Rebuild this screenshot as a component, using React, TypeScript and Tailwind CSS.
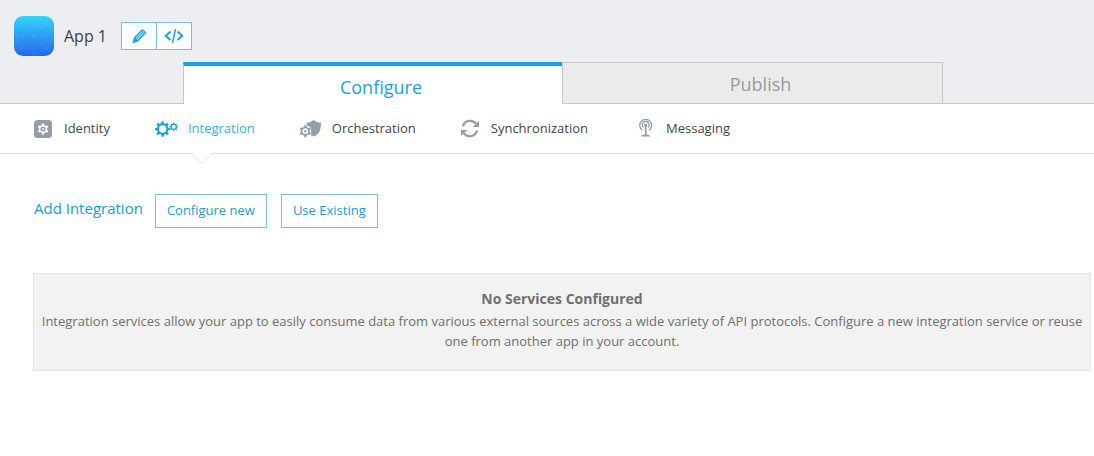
import type { ReactNode } from 'react';

function gearPath(cx: number, cy: number, outer: number, inner: number, hole: number, teeth: number) {
  const step = (Math.PI * 2) / teeth;
  const at = (r: number, a: number) =>
    `${(cx + r * Math.sin(a)).toFixed(2)} ${(cy - r * Math.cos(a)).toFixed(2)}`;
  const points: string[] = [];
  for (let i = 0; i < teeth; i++) {
    const a = i * step;
    points.push(at(inner, a - step * 0.28), at(outer, a - step * 0.17), at(outer, a + step * 0.17), at(inner, a + step * 0.28));
  }
  return `M${points.join('L')}ZM${cx - hole} ${cy}a${hole} ${hole} 0 1 0 ${hole * 2} 0a${hole} ${hole} 0 1 0 ${-hole * 2} 0Z`;
}

function AppLogo() {
  return (
    <svg width="40" height="40" viewBox="0 0 40 40" aria-hidden="true">
      <defs>
        <linearGradient id="logo" x1="0" y1="0" x2="0" y2="1">
          <stop offset="0" stopColor="#31d4fa" />
          <stop offset="1" stopColor="#2466eb" />
        </linearGradient>
        <clipPath id="logo-clip">
          <rect width="40" height="40" rx="9" />
        </clipPath>
      </defs>
      <rect width="40" height="40" rx="9" fill="url(#logo)" />
      <g clipPath="url(#logo-clip)" fill="none" stroke="#fff" strokeOpacity="0.12" strokeWidth="0.5">
        <path d="M0 0L40 40M40 0L0 40M20 0V40M0 20H40M0 8H40M0 32H40M8 0V40M32 0V40" />
        <circle cx="20" cy="20" r="10.500" />
        <circle cx="20" cy="20" r="17.500" />
      </g>
    </svg>
  );
}

function PencilIcon() {
  return (
    <svg width="15" height="16" viewBox="0 0 15 16" fill="none" stroke="#1aa3da" aria-hidden="true">
      <path d="M10.300 1.600L13.800 4.600L5.800 13L2.300 10Z" fill="#8fd0ec" strokeWidth="1.200" strokeLinejoin="round" />
      <path d="M8.800 3.200L12.300 6.200M4.100 11.400L10.300 4.900" strokeWidth="0.700" />
      <path d="M2.300 10L0.800 15L5.800 13Z" fill="#1aa3da" strokeWidth="0.800" strokeLinejoin="round" />
    </svg>
  );
}

function CodeIcon() {
  return (
    <svg width="20" height="16" viewBox="0 0 20 16" fill="none" stroke="#1aa3da" strokeWidth="2" aria-hidden="true">
      <path d="M6.500 3.500L1.800 7.700L6.500 12M13.500 3.500L18.200 7.700L13.500 12" />
      <path d="M11.500 1L8.500 15" strokeWidth="1.500" />
    </svg>
  );
}

function IdentityIcon() {
  return (
    <svg width="20" height="20" viewBox="0 0 20 20" aria-hidden="true">
      <rect y="1" width="18" height="18" rx="3.500" fill="#949da8" />
      <path d={gearPath(9, 10, 5.6, 4.2, 2.6, 6)} fill="#fff" fillRule="evenodd" />
      <circle cx="9" cy="10" r="1.200" fill="#fff" fillOpacity="0.700" />
    </svg>
  );
}

function IntegrationIcon() {
  return (
    <svg width="23" height="20" viewBox="0 0 23 20" fill="#1aa3da" fillRule="evenodd" aria-hidden="true">
      <path d={gearPath(7.6, 10, 7.8, 5.8, 3.7, 8)} />
      <path d={gearPath(18.7, 7.8, 4.3, 3.2, 1.9, 8)} />
    </svg>
  );
}

function OrchestrationIcon() {
  return (
    <svg width="22" height="20" viewBox="0 0 22 20" fill="#949da8" aria-hidden="true">
      <path d="M6.500 3.800C9 3.600 11.500 2.700 13.300 1C15.500 2.700 18 3.600 21 3.600C21 10 20 15 13.700 17.600L10.500 16Q12 11 9.300 7.300L6.500 6.600Z" />
      <path d={gearPath(5.3, 12.2, 6.3, 4.9, 2.6, 6)} fillRule="evenodd" stroke="#fff" strokeWidth="0.500" />
      <circle cx="5.300" cy="12.200" r="1.200" />
    </svg>
  );
}

function SyncIcon() {
  return (
    <svg width="20" height="20" viewBox="0 0 20 20" fill="#949da8" aria-hidden="true">
      <path d="M2 7.500A7.300 7.300 0 0 1 15 4.800M16 11.500A7.300 7.300 0 0 1 3 14.200" fill="none" stroke="#949da8" strokeWidth="2.300" />
      <path d="M18 2V8H11.800ZM0 17V11H6.200Z" />
    </svg>
  );
}

function MessagingIcon() {
  return (
    <svg width="23" height="20" viewBox="-6 0 23 20" fill="none" stroke="#949da8" strokeWidth="1.300" aria-hidden="true">
      <path d="M3.300 11.300A6 6 0 1 1 10.100 11.300M4.400 8.500A3.500 3.500 0 1 1 9 8.500" />
      <circle cx="6.700" cy="6" r="1.500" fill="#949da8" stroke="none" />
      <path d="M6.700 6V16" strokeWidth="1.800" />
      <path d="M1.800 17.500Q2.500 15.500 6.700 15.500T11.600 17.500Z" fill="#949da8" stroke="none" />
    </svg>
  );
}

type NavItem = { label: string; icon: ReactNode; active?: boolean };

const navItems: NavItem[] = [
  { label: 'Identity', icon: <IdentityIcon /> },
  { label: 'Integration', icon: <IntegrationIcon />, active: true },
  { label: 'Orchestration', icon: <OrchestrationIcon /> },
  { label: 'Synchronization', icon: <SyncIcon /> },
  { label: 'Messaging', icon: <MessagingIcon /> },
];

export default function App() {
  return (
    <div className="min-h-screen bg-white font-['Open_Sans',sans-serif] text-[#444]">
      <header className="bg-[#edeef2]">
        <div className="flex h-[62px] items-center pt-[10px] pl-[14px]">
          <AppLogo />
          <h1 className="ml-[10px] text-base text-[#3c3f45]">App 1</h1>
          <div className="ml-[14px] flex h-7 divide-x divide-[#78bfe8] border border-[#78bfe8] bg-white">
            <button type="button" aria-label="Edit app" className="flex w-[35px] items-center justify-center">
              <PencilIcon />
            </button>
            <button type="button" aria-label="View code" className="flex w-[34px] items-center justify-center">
              <CodeIcon />
            </button>
          </div>
        </div>
        <div className="flex h-[42px] items-stretch text-lg">
          <div className="min-w-8 flex-1 border-b border-[#c8c8c8] pl-8" />
          <div className="grid w-full max-w-[760px] grid-cols-[379fr_381fr]">
            <button type="button" className="border-t-4 border-l border-t-[#1aa3da] border-l-[#c8c8c8] bg-white pt-1 pl-4 text-[#1aa3da]">
              Configure
            </button>
            <button type="button" className="border border-[#c8c8c8] bg-[#ebebeb] pt-px pl-4 text-[#9b9b9b]">
              Publish
            </button>
          </div>
          <div className="flex-1 border-b border-[#c8c8c8]" />
        </div>
      </header>
      <nav className="flex h-[50px] gap-[45px] border-b border-[#e5e3e4] pl-[34px] text-[13px]">
        {navItems.map(({ label, icon, active }) => (
          <a
            key={label}
            href={`#${label.toLowerCase()}`}
            aria-current={active ? 'page' : undefined}
            className={active ? 'relative flex items-center gap-[10px] text-[#3fb0e2]' : 'flex items-center gap-[10px]'}
          >
            {icon}
            {label}
            {active && (
              <svg className="absolute top-[49px] left-9" width="22" height="12" viewBox="0 0 22 12" aria-hidden="true">
                <path d="M1 0H21L11 10Z" fill="#fff" />
                <path d="M1 0.500L11 10.500L21 0.500" fill="none" stroke="#e5e3e4" />
              </svg>
            )}
          </a>
        ))}
      </nav>
      <main className="pt-10 pr-[3px] pl-[33px]">
        <section className="flex h-[34px] text-[#1a9bd0]">
          <h2 className="mr-3 pl-px text-[15px] leading-7">Add Integration</h2>
          <button type="button" className="mr-[14px] border border-[#78bfe8] px-[11px] text-[13px]">
            Configure new
          </button>
          <button type="button" className="border border-[#78bfe8] px-[11px] text-[13px]">
            Use Existing
          </button>
        </section>
        <section className="mt-[45px] border border-[#e4e4e4] bg-[#f2f2f2] px-1 pt-[13px] pb-[19px] text-center text-[13px] text-[#6f6f6f]">
          <h3 className="text-sm leading-6 font-bold">No Services Configured</h3>
          <p className="leading-5">
            Integration services allow your app to easily consume data from various external sources across a wide variety of API
            protocols. Configure a new integration service or reuse one from another app in your account.
          </p>
        </section>
      </main>
    </div>
  );
}
